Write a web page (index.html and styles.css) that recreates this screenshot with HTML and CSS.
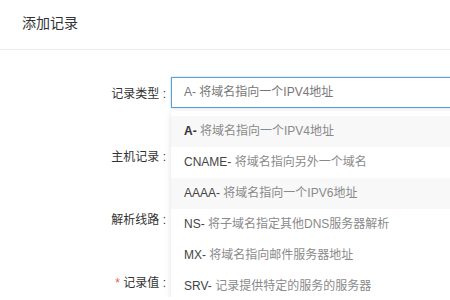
FILE: index.html
```html
<!DOCTYPE html>
<html lang="zh-CN">
<head>
    <meta charset="UTF-8">
    <title>添加记录</title>
    <link rel="stylesheet" href="styles.css">
</head>
<body>
<div class="header">添加记录</div>

<div class="form">
    <div class="row">
        <label class="label">记录类型 :</label>
        <div class="control">
            <div class="select">A- 将域名指向一个IPV4地址</div>
            <ul class="menu">
                <li class="active"><b>A-</b> <span>将域名指向一个IPV4地址</span></li>
                <li><b>CNAME-</b> <span>将域名指向另外一个域名</span></li>
                <li class="hover"><b>AAAA-</b> <span>将域名指向一个IPV6地址</span></li>
                <li><b>NS-</b> <span>将子域名指定其他DNS服务器解析</span></li>
                <li><b>MX-</b> <span>将域名指向邮件服务器地址</span></li>
                <li><b>SRV-</b> <span>记录提供特定的服务的服务器</span></li>
            </ul>
        </div>
    </div>
    <div class="row">
        <label class="label">主机记录 :</label>
    </div>
    <div class="row">
        <label class="label">解析线路 :</label>
    </div>
    <div class="row">
        <label class="label"><i class="req">*</i> 记录值 :</label>
    </div>
</div>
</body>
</html>
```

FILE: styles.css
```css
body { margin: 0; background: #fff; font-family: "Liberation Sans", "Noto Sans CJK SC", sans-serif; color: #333; overflow: hidden; }
.header { height: 49px; line-height: 46px; padding: 0 22px; font-size: 14px; color: #333; border-bottom: 1px solid #ebebeb; }
.form { padding-top: 27px; display: flex; flex-direction: column; gap: 32px; }
.row { display: flex; align-items: center; height: 31px; }
.label { flex-shrink: 0; width: 171px; padding-right: 5px; box-sizing: border-box; text-align: right; font-size: 12px; color: #333; white-space: nowrap; }
.req { font-style: normal; color: #e2615c; }
.control { flex-shrink: 0; position: relative; width: 300px; height: 31px; }
.select { box-sizing: border-box; height: 31px; line-height: 29px; padding-left: 12px; border: 1px solid #5e9fd3; box-shadow: 0 0 2px rgba(94, 159, 211, 0.5); font-size: 12px; color: #777; }
.menu { position: absolute; top: 34px; left: 0; right: 0; margin: 0; padding: 5px 0; list-style: none; background: #fff; box-shadow: 0 2px 6px rgba(0, 0, 0, 0.13); z-index: 2; }
.menu li { height: 31px; line-height: 31px; padding-left: 13px; font-size: 12px; white-space: nowrap; }
.menu li b { font-weight: normal; color: #444; }
.menu li span { color: #8a8a8a; }
.menu li.active { background: #f8f8f8; }
.menu li.active b { font-weight: bold; color: #333; }
.menu li.hover { background: #f8f8f8; }
```
